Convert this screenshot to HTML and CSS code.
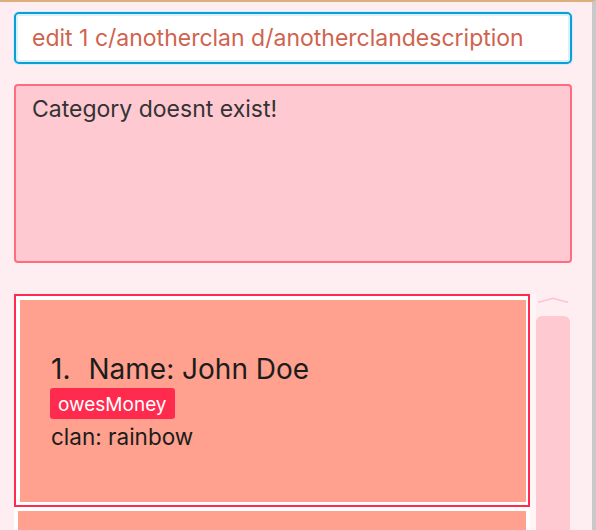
FILE: index.html
```html
<!DOCTYPE html>
<html>
<head>
<meta charset="utf-8">
<link rel="stylesheet" href="styles.css">
</head>
<body>
<div class="app">
  <div class="command-box">
    <div class="command-input">edit 1 c/anotherclan d/anotherclandescription</div>
  </div>
  <div class="result-box">Category doesnt exist!</div>
  <div class="list-row">
    <div class="list-view">
      <div class="cell selected">
        <div class="card">
          <div class="name-line"><span class="idx">1.</span><span>Name: John Doe</span></div>
          <div class="tags"><span class="tag">owesMoney</span></div>
          <div class="clan">clan: rainbow</div>
        </div>
      </div>
      <div class="cell">
        <div class="card"></div>
      </div>
    </div>
    <div class="gutter"></div>
    <div class="scrollbar">
      <svg class="arrow" width="32" height="6" viewBox="0 0 32 6"><path d="M1 5.2 Q8 3.6 16 1.2 Q24 3.6 31 5.2" fill="none" stroke="#ffc3cd" stroke-width="1.6"/></svg>
      <div class="thumb"></div>
    </div>
  </div>
</div>
</body>
</html>
```
FILE: styles.css
```css
html, body {
  margin: 0;
  padding: 0;
  background: #ffeef1;
  overflow: hidden;
}
.app {
  width: 596px;
  height: 530px;
  box-sizing: border-box;
  border-top: 2px solid #dcb07e;
  border-right: 4px solid #c9c9c9;
  padding: 10px 20px 0 14px;
  font-family: Inter, "Noto Sans", sans-serif;
  display: flex;
  flex-direction: column;
  overflow: hidden;
}
.command-box {
  width: 558px;
  height: 52px;
  flex: none;
  box-sizing: border-box;
  border: 2px solid #0b9fd8;
  border-radius: 5px;
  background: #fff;
  box-shadow: 0 0 0 1px #d6ecf7, inset 0 0 0 2px #dbf1fa;
  display: flex;
  align-items: center;
  padding-left: 16px;
}
.command-input {
  color: #d0634f;
  font-size: 23px;
  white-space: nowrap;
}
.result-box {
  margin-top: 20px;
  width: 558px;
  height: 179px;
  flex: none;
  box-sizing: border-box;
  background: #ffc9d2;
  border: 2px solid #ff6b80;
  border-radius: 4px;
  padding: 9px 16px;
  color: #333;
  font-size: 23px;
}
.list-row {
  margin-top: 31px;
  display: flex;
  flex: 1;
  min-height: 0;
}
.list-view {
  width: 516px;
  background: #fff;
  display: flex;
  flex-direction: column;
  overflow: hidden;
}
.cell {
  padding: 4px;
  box-sizing: border-box;
  flex: none;
}
.cell.selected {
  border: 2px solid #ff2a4f;
  padding: 4px 2px 3px 4px;
}
.card {
  background: #ffa18e;
  height: 202px;
  box-sizing: border-box;
  padding: 52px 0 0 31px;
  color: #1c1c1c;
}
.name-line {
  font-size: 28px;
  line-height: 34px;
  display: flex;
  gap: 18px;
}
.tags {
  margin-top: 2px;
  display: flex;
}
.tag {
  background: #ff2b4f;
  color: #fff;
  font-size: 19px;
  line-height: 29px;
  height: 31px;
  box-sizing: border-box;
  padding: 2px 8px 0;
  border-radius: 3px;
  margin-left: -1px;
}
.clan {
  font-size: 22.5px;
  line-height: 28px;
  margin-top: 4px;
}
.gutter {
  width: 6px;
  background: #fff5f7;
}
.scrollbar {
  width: 34px;
  display: flex;
  flex-direction: column;
  align-items: center;
}
.arrow {
  margin-top: 3px;
  display: block;
  flex: none;
}
.thumb {
  margin-top: 13px;
  width: 34px;
  flex: 1;
  background: #ffc9d2;
  border-radius: 6px 6px 0 0;
}
```
